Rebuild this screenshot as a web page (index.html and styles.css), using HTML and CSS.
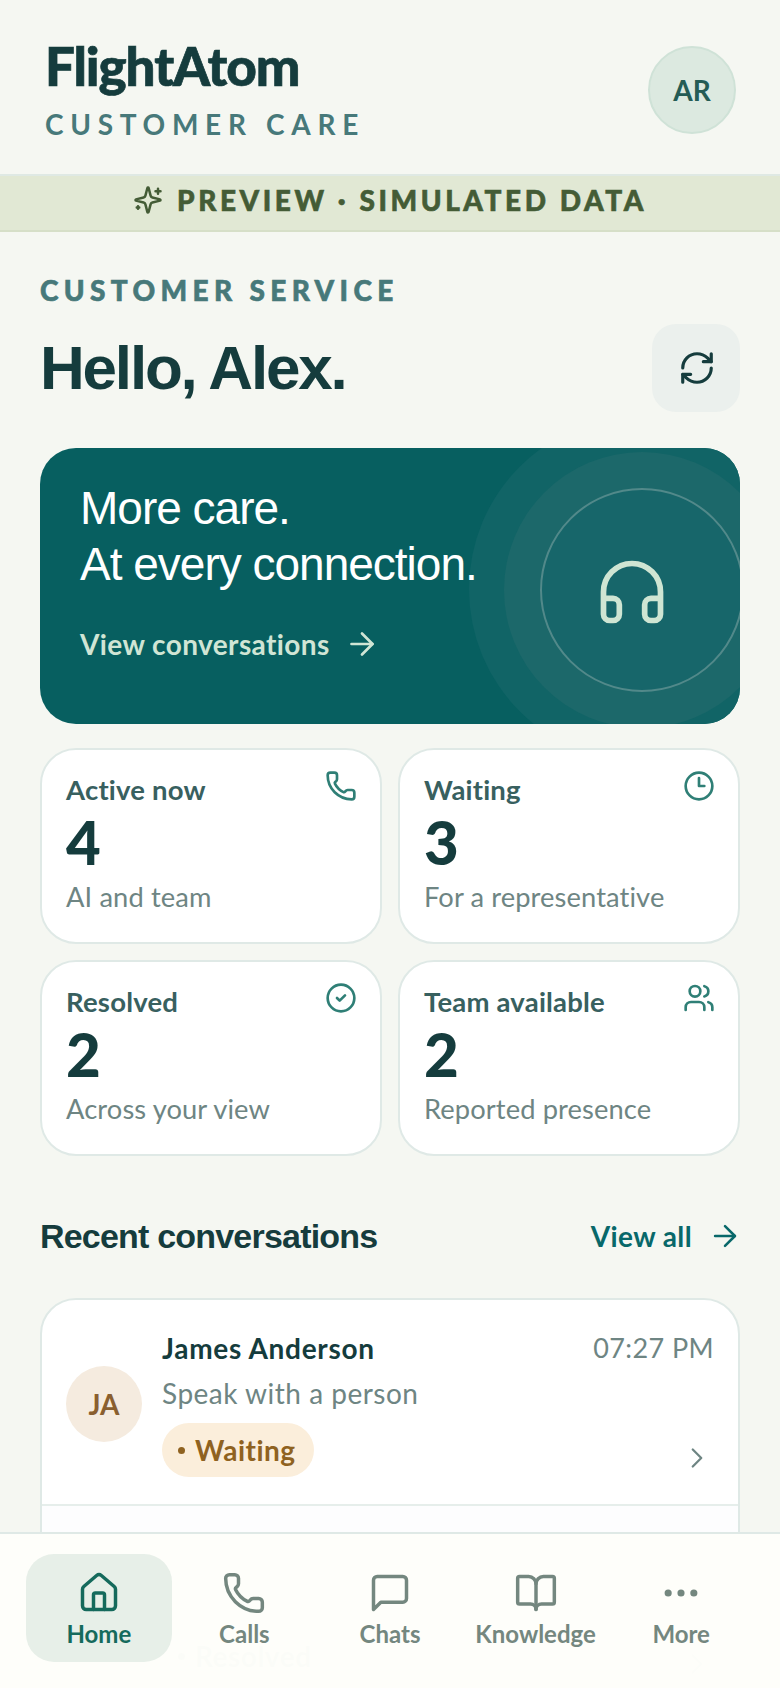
FILE: index.html
```html
<!DOCTYPE html>
<html lang="en">
<head>
<meta charset="utf-8">
<title>FlightAtom Customer Care</title>
<link rel="stylesheet" href="styles.css">
</head>
<body>
<div class="app">
  <header class="header">
    <div class="brand">
      <div class="logo">FlightAtom</div>
      <div class="tagline">CUSTOMER CARE</div>
    </div>
    <div class="avatar">AR</div>
  </header>
  <div class="banner">
    <svg class="ico spark" viewBox="0 0 24 24"><path d="M9.937 15.5A2 2 0 0 0 8.5 14.063l-6.135-1.582a.5.5 0 0 1 0-.962L8.5 9.936A2 2 0 0 0 9.937 8.5l1.582-6.135a.5.5 0 0 1 .963 0L14.063 8.5A2 2 0 0 0 15.5 9.937l6.135 1.581a.5.5 0 0 1 0 .964L15.5 14.063a2 2 0 0 0-1.437 1.437l-1.582 6.135a.5.5 0 0 1-.963 0z"/><path d="M20 3v4M22 5h-4M4 17v2M5 18H3"/></svg>
    <span>PREVIEW · SIMULATED DATA</span>
  </div>
  <main class="main">
    <div class="eyebrow">CUSTOMER SERVICE</div>
    <div class="greet-row">
      <h1 class="greet">Hello, Alex.</h1>
      <button class="refresh"><svg class="ico refresh-ico" viewBox="0 0 24 24"><path d="M3 12a9 9 0 0 1 9-9 9.75 9.75 0 0 1 6.74 2.74L21 8"/><path d="M21 3v5h-5"/><path d="M21 12a9 9 0 0 1-9 9 9.75 9.75 0 0 1-6.74-2.74L3 16"/><path d="M8 16H3v5"/></svg></button>
    </div>
    <section class="hero">
      <div class="ring ring-a"></div>
      <div class="ring ring-b"></div>
      <div class="ring ring-c"></div>
      <svg class="ico headset" viewBox="0 0 24 24"><path d="M3 14h3a2 2 0 0 1 2 2v3a2 2 0 0 1-2 2H5a2 2 0 0 1-2-2v-7a9 9 0 0 1 18 0v7a2 2 0 0 1-2 2h-1a2 2 0 0 1-2-2v-3a2 2 0 0 1 2-2h3"/></svg>
      <h2 class="hero-title">More care.<br>At every connection.</h2>
      <div class="hero-link">View conversations <svg class="ico arrow" viewBox="0 0 24 24"><path d="M5 12h14"/><path d="m12 5 7 7-7 7"/></svg></div>
    </section>
    <section class="stats">
      <article class="stat">
        <div class="stat-top"><span class="stat-label">Active now</span><svg class="ico stat-ico" viewBox="0 0 24 24"><path d="M13.832 16.568a1 1 0 0 0 1.213-.303l.355-.465A2 2 0 0 1 17 15h3a2 2 0 0 1 2 2v3a2 2 0 0 1-2 2A18 18 0 0 1 2 4a2 2 0 0 1 2-2h3a2 2 0 0 1 2 2v3a2 2 0 0 1-.8 1.6l-.468.351a1 1 0 0 0-.292 1.233 14 14 0 0 0 6.392 6.384"/></svg></div>
        <div class="stat-num">4</div>
        <div class="stat-sub">AI and team</div>
      </article>
      <article class="stat">
        <div class="stat-top"><span class="stat-label">Waiting</span><svg class="ico stat-ico" viewBox="0 0 24 24"><circle cx="12" cy="12" r="10"/><path d="M12 6v6h4"/></svg></div>
        <div class="stat-num">3</div>
        <div class="stat-sub">For a representative</div>
      </article>
      <article class="stat">
        <div class="stat-top"><span class="stat-label">Resolved</span><svg class="ico stat-ico" viewBox="0 0 24 24"><circle cx="12" cy="12" r="10"/><path d="m9 12 2 2 4-4"/></svg></div>
        <div class="stat-num">2</div>
        <div class="stat-sub">Across your view</div>
      </article>
      <article class="stat">
        <div class="stat-top"><span class="stat-label">Team available</span><svg class="ico stat-ico" viewBox="0 0 24 24"><path d="M16 21v-2a4 4 0 0 0-4-4H6a4 4 0 0 0-4 4v2"/><circle cx="9" cy="7" r="4"/><path d="M22 21v-2a4 4 0 0 0-3-3.87"/><path d="M16 3.13a4 4 0 0 1 0 7.75"/></svg></div>
        <div class="stat-num">2</div>
        <div class="stat-sub">Reported presence</div>
      </article>
    </section>
    <div class="section-head">
      <h2 class="section-title">Recent conversations</h2>
      <div class="view-all">View all <svg class="ico arrow" viewBox="0 0 24 24"><path d="M5 12h14"/><path d="m12 5 7 7-7 7"/></svg></div>
    </div>
    <section class="list">
      <article class="row">
        <div class="row-av">JA</div>
        <div class="row-body">
          <div class="row-name">James Anderson</div>
          <div class="row-msg">Speak with a person</div>
          <div class="chip"><span class="chip-dot"></span>Waiting</div>
        </div>
        <div class="row-side">
          <div class="row-time">07:27 PM</div>
          <svg class="ico chev" viewBox="0 0 24 24"><path d="m9 18 6-6-6-6"/></svg>
        </div>
      </article>
      <article class="row row-next">
        <div class="row-av row-av-next"></div>
        <div class="row-body">
          <div class="row-name row-blank"></div>
          <div class="row-msg row-blank"></div>
          <div class="chip chip-next"><span class="chip-dot"></span>Resolved</div>
        </div>
        <div class="row-side">
          <div class="row-time row-blank"></div>
          <svg class="ico chev" viewBox="0 0 24 24"><path d="m9 18 6-6-6-6"/></svg>
        </div>
      </article>
    </section>
  </main>
  <nav class="nav">
    <div class="tab tab-on"><svg class="ico tab-ico" viewBox="0 0 24 24"><path d="M15 21v-8a1 1 0 0 0-1-1h-4a1 1 0 0 0-1 1v8"/><path d="M3 10a2 2 0 0 1 .709-1.528l7-5.999a2 2 0 0 1 2.582 0l7 5.999A2 2 0 0 1 21 10v9a2 2 0 0 1-2 2H5a2 2 0 0 1-2-2z"/></svg><span>Home</span></div>
    <div class="tab"><svg class="ico tab-ico" viewBox="0 0 24 24"><path d="M13.832 16.568a1 1 0 0 0 1.213-.303l.355-.465A2 2 0 0 1 17 15h3a2 2 0 0 1 2 2v3a2 2 0 0 1-2 2A18 18 0 0 1 2 4a2 2 0 0 1 2-2h3a2 2 0 0 1 2 2v3a2 2 0 0 1-.8 1.6l-.468.351a1 1 0 0 0-.292 1.233 14 14 0 0 0 6.392 6.384"/></svg><span>Calls</span></div>
    <div class="tab"><svg class="ico tab-ico" viewBox="0 0 24 24"><path d="M21 15a2 2 0 0 1-2 2H7l-4 4V5a2 2 0 0 1 2-2h14a2 2 0 0 1 2 2z"/></svg><span>Chats</span></div>
    <div class="tab"><svg class="ico tab-ico" viewBox="0 0 24 24"><path d="M12 7v14"/><path d="M3 18a1 1 0 0 1-1-1V4a1 1 0 0 1 1-1h5a4 4 0 0 1 4 4 4 4 0 0 1 4-4h5a1 1 0 0 1 1 1v13a1 1 0 0 1-1 1h-6a3 3 0 0 0-3 3 3 3 0 0 0-3-3z"/></svg><span>Knowledge</span></div>
    <div class="tab"><svg class="ico tab-ico" viewBox="0 0 24 24"><circle class="dot" cx="5" cy="12" r="1"/><circle class="dot" cx="12" cy="12" r="1"/><circle class="dot" cx="19" cy="12" r="1"/></svg><span>More</span></div>
  </nav>
</div>
</body>
</html>
```

FILE: styles.css
```css
* { box-sizing: border-box; }
html, body { margin: 0; padding: 0; }
body { background: #f5f7f2; font-family: Lato, "Open Sans", sans-serif; color: #153c3d; }
.app { position: relative; width: 780px; height: 1688px; overflow: hidden; background: #f5f7f2; }
.ico { fill: none; stroke: currentColor; stroke-width: 2; stroke-linecap: round; stroke-linejoin: round; flex: none; display: block; }

.header { height: 174px; padding: 0 44px 0 45px; display: flex; justify-content: space-between; align-items: center; }
.logo { font-size: 53px; line-height: 64px; font-weight: 900; letter-spacing: -1.1px; -webkit-text-stroke: 0.7px #153c3d; color: #153c3d; }
.tagline { margin-top: 9px; font-size: 28px; line-height: 34px; font-weight: 700; letter-spacing: 6.7px; color: #47797a; }
.avatar { margin-top: 6px; width: 88px; height: 88px; border-radius: 50%; background: #dce9e0; border: 2px solid #cfe2d7; display: flex; align-items: center; justify-content: center; font-size: 28px; font-weight: 700; color: #245c55; }

.banner { height: 58px; padding-bottom: 6px; background: #e1e8d4; border-top: 2px solid #dfe9e4; border-bottom: 2px solid #d6dfc8; display: flex; align-items: center; justify-content: center; gap: 14px; color: #445c36; font-size: 28px; font-weight: 900; letter-spacing: 3.57px; -webkit-text-stroke: 0.6px #445c36; }
.spark { width: 30px; height: 30px; }

.main { padding: 41px 40px 0; }
.eyebrow { font-size: 28px; line-height: 34px; font-weight: 900; letter-spacing: 5.35px; -webkit-text-stroke: 0.6px #47797a; color: #47797a; }
.greet-row { margin-top: 17px; display: flex; justify-content: space-between; align-items: center; }
.greet { margin: 0; font-family: "Liberation Sans", Arial, sans-serif; font-size: 62px; line-height: 88px; font-weight: 700; letter-spacing: -2.2px; color: #153c3d; }
.refresh { width: 88px; height: 88px; border: 0; border-radius: 24px; background: #ebf0ed; color: #153c3d; display: flex; align-items: center; justify-content: center; padding: 0 0 0 2px; }
.refresh-ico { width: 38px; height: 38px; }

.hero { position: relative; overflow: hidden; margin-top: 36px; height: 276px; border-radius: 36px; background: #075f60; padding: 32px 40px 0; }
.ring { position: absolute; border-radius: 50%; }
.ring-a { left: 429px; top: -32px; width: 346px; height: 346px; background: #116466; }
.ring-b { left: 464px; top: 4px; width: 276px; height: 276px; background: #1c686a; }
.ring-c { left: 500px; top: 40px; width: 204px; height: 204px; background: #17666a; border: 2px solid #52898a; }
.headset { position: absolute; left: 554px; top: 106px; width: 76px; height: 76px; color: #cfe5d3; stroke-width: 1.8; }
.hero-title { position: relative; margin: 0; font-family: "Liberation Sans", Arial, sans-serif; font-size: 46px; line-height: 56px; font-weight: 400; letter-spacing: -1px; color: #fff; }
.hero-link { position: relative; margin-top: 34px; display: flex; align-items: center; gap: 14px; font-size: 28px; line-height: 36px; font-weight: 700; letter-spacing: 0.4px; color: #d0e5d5; }
.arrow { width: 36px; height: 36px; stroke-width: 1.8; }

.stats { margin-top: 24px; display: grid; grid-template-columns: 1fr 1fr; gap: 16px; }
.stat { height: 196px; background: #fff; border: 2px solid #dfe9e6; border-radius: 36px; padding: 22px 24px; }
.stat-top { display: flex; justify-content: space-between; align-items: flex-start; }
.stat-label { padding-top: 1px; font-size: 27.5px; line-height: 34px; font-weight: 700; letter-spacing: 0.2px; color: #38605f; }
.stat-ico { width: 32px; height: 32px; color: #2f7f76; margin-top: -2px; margin-right: -1px; }
.stat-num { margin-top: 3px; font-size: 60px; line-height: 64px; font-weight: 900; color: #153c3d; }
.stat-sub { margin-top: 6px; font-size: 27.3px; line-height: 34px; font-weight: 400; letter-spacing: 0.1px; color: #6e8583; }

.section-head { margin-top: 56px; display: flex; justify-content: space-between; align-items: center; }
.section-title { margin: 0; font-family: "Liberation Sans", Arial, sans-serif; font-size: 34px; line-height: 48px; font-weight: 700; letter-spacing: -0.8px; color: #153c3d; }
.view-all { display: flex; align-items: center; gap: 16px; font-size: 28px; line-height: 36px; font-weight: 700; letter-spacing: 0.4px; color: #08686a; }
.view-all .arrow { width: 34px; height: 34px; margin-right: -2px; }

.list { margin-top: 38px; background: #fff; border: 2px solid #dfe9e6; border-radius: 36px; }
.row { height: 206px; padding: 31px 24px 0; display: flex; align-items: flex-start; gap: 20px; border-bottom: 2px solid #e6eeeb; }
.row-next { background: #fdfdfe; }
.row-av { margin-top: 35px; width: 76px; height: 76px; border-radius: 50%; background: #f5ebdf; color: #8a5f2f; font-size: 28px; font-weight: 700; display: flex; align-items: center; justify-content: center; flex: none; }
.row-av-next { background: #dce9e0; }
.row-body { flex: 1; }
.row-name { height: 34px; font-size: 28px; line-height: 34px; font-weight: 700; letter-spacing: 0.7px; color: #153c3d; }
.row-msg { height: 36px; margin-top: 10px; font-size: 28px; line-height: 36px; color: #6e8583; letter-spacing: 0.5px; }
.chip { margin-top: 12px; display: inline-flex; align-items: center; gap: 10px; height: 54px; padding: 0 18px 0 16px; border-radius: 27px; background: #fbeedb; color: #8f6220; font-size: 28px; font-weight: 700; letter-spacing: 0.5px; }
.chip-dot { width: 7px; height: 7px; border-radius: 50%; background: currentColor; }
.chip-next { background: #e4efe7; color: #2f6f5f; }
.row-side { align-self: stretch; display: flex; flex-direction: column; align-items: flex-end; }
.row-time { height: 34px; font-size: 27px; line-height: 34px; letter-spacing: 0.4px; color: #6e8583; }
.chev { margin-top: 76px; margin-right: 0; width: 34px; height: 34px; color: #6e8583; stroke-width: 1.6; }

.nav { position: absolute; left: 0; right: 0; bottom: 0; height: 156px; padding: 20px 26px 0; display: grid; grid-template-columns: repeat(5, 1fr); align-items: start; background: rgba(254, 254, 250, 0.99); border-top: 2px solid #dfe9e6; }
.tab { height: 108px; border-radius: 28px; padding-top: 17px; display: flex; flex-direction: column; align-items: center; color: #74877f; font-size: 24px; line-height: 30px; font-weight: 700; }
.tab-on { background: #e7efe8; color: #156a5c; }
.tab-ico { width: 44px; height: 44px; margin-bottom: 4px; stroke-width: 1.9; }
.dot { fill: currentColor; }
```
